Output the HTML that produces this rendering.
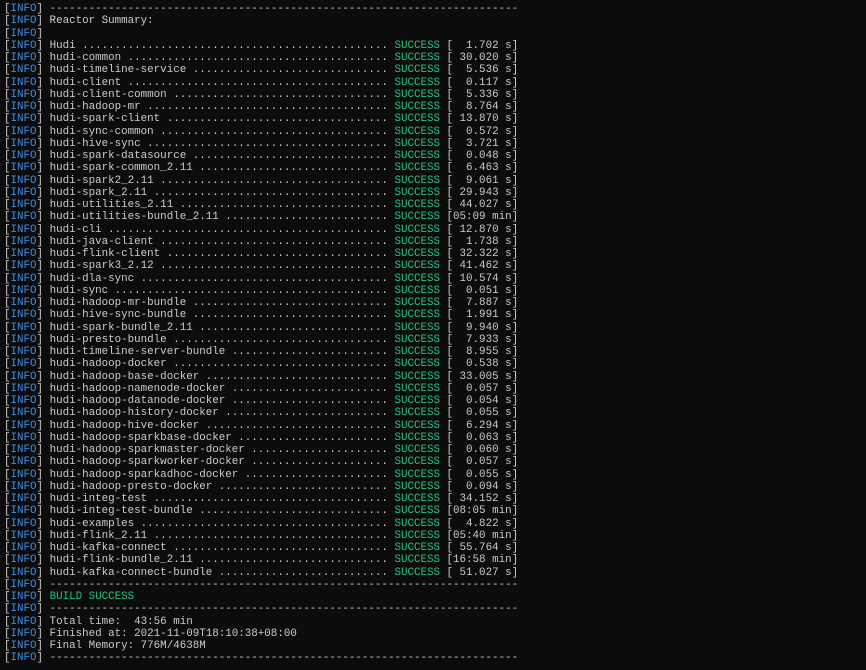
<!DOCTYPE html>
<html><head><meta charset="utf-8"><style>
html,body{margin:0;background:#0c0c0c;width:866px;height:670px;overflow:hidden}
#t{position:absolute;left:4px;top:3px;font-family:"Liberation Mono",monospace;font-size:10.85px;line-height:12.25px;color:#cccccc;white-space:pre}
.l{height:12.25px}
.i{color:#3b8eea}
.s{color:#1fc57e}
.c{display:inline-block;overflow:hidden;vertical-align:top;height:12.25px;white-space:pre}
.d{width:52ch}
.h{width:72ch}
</style></head><body><div id="t"></div>
<script>
var D='.'.repeat(120),H='-'.repeat(120);
var P='[<span class="i">INFO</span>] ';
var mods=[["Hudi","  1.702 s"],["hudi-common"," 30.020 s"],["hudi-timeline-service","  5.536 s"],["hudi-client","  0.117 s"],["hudi-client-common","  5.336 s"],["hudi-hadoop-mr","  8.764 s"],["hudi-spark-client"," 13.870 s"],["hudi-sync-common","  0.572 s"],["hudi-hive-sync","  3.721 s"],["hudi-spark-datasource","  0.048 s"],["hudi-spark-common_2.11","  6.463 s"],["hudi-spark2_2.11","  9.061 s"],["hudi-spark_2.11"," 29.943 s"],["hudi-utilities_2.11"," 44.027 s"],["hudi-utilities-bundle_2.11","05:09 min"],["hudi-cli"," 12.870 s"],["hudi-java-client","  1.738 s"],["hudi-flink-client"," 32.322 s"],["hudi-spark3_2.12"," 41.462 s"],["hudi-dla-sync"," 10.574 s"],["hudi-sync","  0.051 s"],["hudi-hadoop-mr-bundle","  7.887 s"],["hudi-hive-sync-bundle","  1.991 s"],["hudi-spark-bundle_2.11","  9.940 s"],["hudi-presto-bundle","  7.933 s"],["hudi-timeline-server-bundle","  8.955 s"],["hudi-hadoop-docker","  0.538 s"],["hudi-hadoop-base-docker"," 33.005 s"],["hudi-hadoop-namenode-docker","  0.057 s"],["hudi-hadoop-datanode-docker","  0.054 s"],["hudi-hadoop-history-docker","  0.055 s"],["hudi-hadoop-hive-docker","  6.294 s"],["hudi-hadoop-sparkbase-docker","  0.063 s"],["hudi-hadoop-sparkmaster-docker","  0.060 s"],["hudi-hadoop-sparkworker-docker","  0.057 s"],["hudi-hadoop-sparkadhoc-docker","  0.055 s"],["hudi-hadoop-presto-docker","  0.094 s"],["hudi-integ-test"," 34.152 s"],["hudi-integ-test-bundle","08:05 min"],["hudi-examples","  4.822 s"],["hudi-flink_2.11","05:40 min"],["hudi-kafka-connect"," 55.764 s"],["hudi-flink-bundle_2.11","16:58 min"],["hudi-kafka-connect-bundle"," 51.027 s"]];
var hr=P+'<span class="c h">'+H+'</span>';
var L=[hr,P+'Reactor Summary:',P];
mods.forEach(function(m){L.push(P+'<span class="c d">'+m[0]+' '+D+'</span> <span class="s">SUCCESS</span> ['+m[1]+']');});
L.push(hr,P+'<span class="s">BUILD SUCCESS</span>',hr,P+'Total time:  43:56 min',P+'Finished at: 2021-11-09T18:10:38+08:00',P+'Final Memory: 776M/4638M',hr);
document.getElementById('t').innerHTML=L.map(function(x){return '<div class="l">'+x+'</div>';}).join('');
</script></body></html>
